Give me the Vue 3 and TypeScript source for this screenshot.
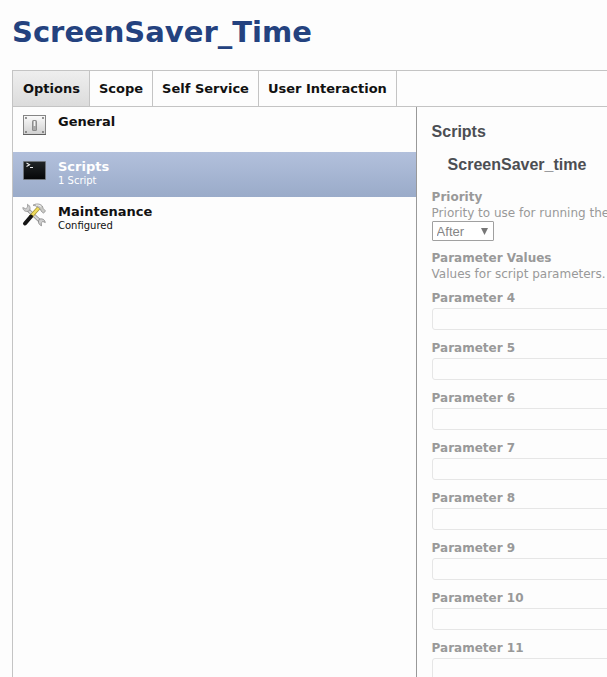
<script setup lang="ts">
import { ref } from 'vue'

interface Section {
  id: 'general' | 'scripts' | 'maintenance'
  name: string
  note: string
}

const tabs: string[] = ['Options', 'Scope', 'Self Service', 'User Interaction']
const sections: Section[] = [
  { id: 'general', name: 'General', note: '' },
  { id: 'scripts', name: 'Scripts', note: '1 Script' },
  { id: 'maintenance', name: 'Maintenance', note: 'Configured' },
]
const parameters: number[] = [4, 5, 6, 7, 8, 9, 10, 11]

const activeTab = ref('Options')
const activeSection = ref<Section['id']>('scripts')
const priority = ref('After')
const values = ref<Record<number, string>>({})
</script>

<template>
  <main class="page">
    <h1>ScreenSaver_Time</h1>
    <nav class="tabs">
      <button
        v-for="tab in tabs"
        :key="tab"
        type="button"
        class="tab"
        :class="{ active: tab === activeTab }"
        @click="activeTab = tab"
      >{{ tab }}</button>
    </nav>
    <div class="body">
      <aside class="sidebar">
        <button
          v-for="s in sections"
          :key="s.id"
          type="button"
          class="section"
          :class="{ selected: s.id === activeSection }"
          @click="activeSection = s.id"
        >
          <svg v-if="s.id === 'general'" class="icon" viewBox="0 0 24 24" aria-hidden="true">
            <defs>
              <linearGradient id="plate" x1="0" y1="0" x2="0" y2="1">
                <stop offset="0" stop-color="#fbfbfb" />
                <stop offset="1" stop-color="#cfcfcf" />
              </linearGradient>
              <linearGradient id="lever" x1="0" y1="0" x2="1" y2="0">
                <stop offset="0" stop-color="#9d9d9d" />
                <stop offset=".5" stop-color="#f4f4f4" />
                <stop offset="1" stop-color="#a3a3a3" />
              </linearGradient>
            </defs>
            <rect x="1.5" y="2.5" width="22" height="19" fill="url(#plate)" stroke="#858585" />
            <path d="M1 21.5h23" stroke="#606060" />
            <g fill="#666">
              <circle cx="4" cy="5" r=".9" /><circle cx="21" cy="5" r=".9" />
              <circle cx="4" cy="19" r=".9" /><circle cx="21" cy="19" r=".9" />
            </g>
            <rect x="10" y="7" width="5" height="11" rx="1.5" fill="#8c8c8c" />
            <rect x="11" y="8" width="3" height="9" rx=".5" fill="url(#lever)" />
            <path d="M11 13h3v4h-3z" fill="#a9a9a9" />
          </svg>
          <svg v-else-if="s.id === 'scripts'" class="icon" viewBox="0 0 24 24" aria-hidden="true">
            <defs>
              <linearGradient id="screen" x1="0" y1="0" x2="0" y2="1">
                <stop offset="0" stop-color="#202426" />
                <stop offset="1" stop-color="#060708" />
              </linearGradient>
            </defs>
            <rect x="1" y="3" width="23" height="19" rx="1" fill="#6f757c" />
            <rect x="2" y="4" width="21" height="17" fill="url(#screen)" />
            <path d="M4.500 5l3 1.700-3 1.700M8 9.500h3" fill="none" stroke="#eee" stroke-width="1.100" />
          </svg>
          <svg v-else class="icon" viewBox="0 0 24 24" aria-hidden="true">
            <path d="M5.500 6.500L19 19" stroke="#8a8a8a" stroke-width="3.600" />
            <path d="M5.500 6.500L19 19" stroke="#d6d6d6" stroke-width="2.200" />
            <path d="M.8 4.500C1 7.500 3.500 9.300 7 8c1.800-2 1.500-5-1.500-6.700L5.700 4 3.800 5.800z" fill="#cecece" stroke="#858585" stroke-width=".7" />
            <path d="M23.300 19.500c-.6-3-3-4.300-6-3.300-1.500 2.300-1 5.300 2.200 6.600l-.3-2.700 1.600-1.600z" fill="#cecece" stroke="#777" stroke-width=".7" />
            <path d="M17 4.500L8.500 14" stroke="#a19135" stroke-width="4" />
            <path d="M17 4.500L8.500 14" stroke="#f0dc5c" stroke-width="2.600" />
            <path d="M9 13.500L3 20.500" stroke="#151515" stroke-width="4" stroke-linecap="round" />
            <path d="M11 2.200C14 .4 18 .5 20.300 3l1 2.700 2.200 2.200-2 2.300-2.500-2.200-.5-2-2.200-1.600C14.800 3 13 2.800 11 2.200z" fill="#cacac6" stroke="#858585" stroke-width=".7" />
            <path d="M14 2.200c2-.4 3.800 0 5 1.400" fill="none" stroke="#f5f5f5" />
          </svg>
          <span class="label">
            <span class="name">{{ s.name }}</span>
            <span v-if="s.note" class="note">{{ s.note }}</span>
          </span>
        </button>
      </aside>
      <section class="detail">
        <h2>Scripts</h2>
        <h3>ScreenSaver_time</h3>
        <div class="field">
          <label class="title" for="priority">Priority</label>
          <p>Priority to use for running the</p>
          <div class="picker">
            <select id="priority" v-model="priority">
              <option>Before</option>
              <option>After</option>
            </select>
            <svg class="arrow" viewBox="0 0 7 7" aria-hidden="true"><path d="M0 0h7L3.500 7z" /></svg>
          </div>
        </div>
        <div class="field">
          <h4 class="title">Parameter Values</h4>
          <p>Values for script parameters.</p>
        </div>
        <div v-for="n in parameters" :key="n" class="parameter">
          <label class="title" :for="`parameter-${n}`">Parameter {{ n }}</label>
          <input :id="`parameter-${n}`" v-model="values[n]" type="text" />
        </div>
      </section>
    </div>
  </main>
</template>

<style>
body {
  background: #fdfdfd;
}
</style>

<style scoped>
.page {
  box-sizing: border-box;
  height: 100vh;
  overflow: hidden;
  display: flex;
  flex-direction: column;
  padding-left: 12px;
  font-family: "DejaVu Sans", Verdana, sans-serif;
  color: #111;
}
h1, h2, h3, h4, p {
  margin: 0;
}
h1 {
  padding: 12px 0 18px;
  font-size: 29px;
  line-height: 40px;
  color: #24427f;
}
button {
  border: 0;
  background: none;
  font-family: inherit;
  color: inherit;
  cursor: pointer;
}
.tabs {
  flex: none;
  display: flex;
  height: 35px;
  border: 1px solid #c4c4c4;
  border-right: 0;
}
.tab {
  padding: 0 9px;
  border-right: 1px solid #c4c4c4;
  font-size: 13px;
  font-weight: bold;
  white-space: nowrap;
}
.tab:first-child {
  padding-left: 10px;
}
.tab.active {
  background: linear-gradient(#eee, #dcdcdc);
}
.body {
  flex: 1;
  min-height: 0;
  display: flex;
}
.sidebar {
  box-sizing: border-box;
  flex: 0 0 68%;
  border-left: 1px solid #c4c4c4;
  border-right: 1px solid #999;
}
.section {
  display: flex;
  width: 100%;
  height: 45px;
  padding: 6px 9px;
  gap: 12px;
  text-align: left;
}
.section.selected {
  background: linear-gradient(#b2c0dc, #9aabc9);
  color: #fff;
}
.icon {
  flex: none;
  width: 24px;
  height: 24px;
}
.label {
  display: flex;
  flex-direction: column;
}
.name {
  font-size: 13px;
  line-height: 17px;
  font-weight: bold;
}
.note {
  font-size: 10px;
  line-height: 12px;
}
.detail {
  flex: 1;
  min-width: 0;
  overflow: hidden;
  padding: 15px 0 0 15px;
  color: #999;
  font-size: 12px;
  line-height: 16px;
  white-space: nowrap;
}
h2, h3 {
  font-family: "Liberation Sans", Arial, sans-serif;
  font-size: 16px;
  line-height: 20px;
  color: #4c4e53;
}
h3 {
  padding: 13px 16px 14px;
}
.title {
  display: block;
  font-size: 12px;
  line-height: 16px;
  font-weight: bold;
}
.field {
  margin-bottom: 8px;
}
.picker {
  display: grid;
  width: 62px;
  padding-bottom: 1px;
}
select {
  grid-area: 1 / 1;
  box-sizing: border-box;
  height: 20px;
  padding: 0 4px;
  appearance: none;
  border: 1px solid #a0a0a0;
  border-radius: 1px;
  background: #fff;
  color: #858585;
  font: 13px "Liberation Sans", Arial, sans-serif;
}
.arrow {
  grid-area: 1 / 1;
  place-self: center end;
  width: 7px;
  height: 7px;
  margin-right: 6px;
  fill: #777;
  pointer-events: none;
}
.parameter {
  height: 50px;
}
input {
  display: block;
  box-sizing: border-box;
  width: 100%;
  min-width: 200px;
  height: 22px;
  margin-top: 2px;
  padding: 0 6px;
  border: 1px solid #e6e6e6;
  border-radius: 3px;
  background: #fdfdfd;
  color: #777;
}
</style>
